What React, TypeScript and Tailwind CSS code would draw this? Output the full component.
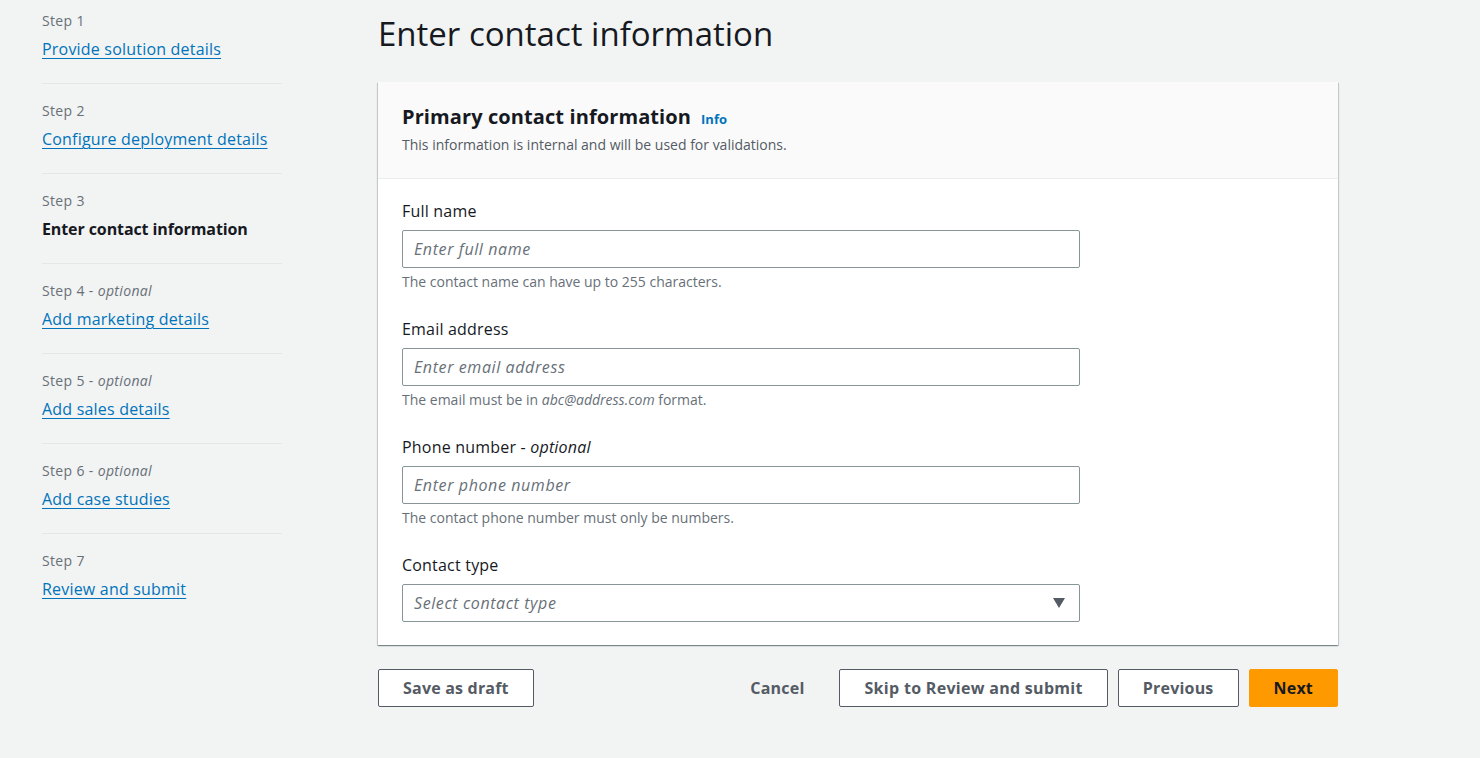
import React from "react";

const steps = [
  { n: 1, title: "Provide solution details", optional: false, current: false },
  { n: 2, title: "Configure deployment details", optional: false, current: false },
  { n: 3, title: "Enter contact information", optional: false, current: true },
  { n: 4, title: "Add marketing details", optional: true, current: false },
  { n: 5, title: "Add sales details", optional: true, current: false },
  { n: 6, title: "Add case studies", optional: true, current: false },
  { n: 7, title: "Review and submit", optional: false, current: false },
];

function Field({
  label,
  optional,
  placeholder,
  help,
  select,
}: {
  label: string;
  optional?: boolean;
  placeholder: string;
  help?: React.ReactNode;
  select?: boolean;
}) {
  return (
    <div className="flex flex-col">
      <div className="text-[16px] leading-[22px] tracking-[0.2px] text-[#16191f]">
        {label}
        {optional && (
          <>
            {" - "}
            <span className="italic">optional</span>
          </>
        )}
      </div>
      <div className="mt-2 w-[678px] h-[38px] border border-[#879596] rounded-[2px] bg-white flex items-center justify-between pl-[11px] pr-[14px]">
        <span className="italic text-[16px] tracking-[0.6px] text-[#687078]">{placeholder}</span>
        {select && (
          <svg width="12" height="10" viewBox="0 0 12 10">
            <path d="M0 0 H12 L6 10 Z" fill="#545b64" />
          </svg>
        )}
      </div>
      {help && (
        <div className="mt-1 text-[14px] leading-[20px] text-[#687078]">{help}</div>
      )}
    </div>
  );
}

export default function App() {
  return (
    <div
      className="min-h-[758px] w-full bg-[#f2f3f3] flex"
      style={{ fontFamily: "'Open Sans', 'Noto Sans', sans-serif" }}
    >
      <nav className="w-[240px] ml-[42px] pt-[11px] flex flex-col shrink-0">
        {steps.map((s, i) => (
          <div
            key={s.n}
            className={`flex flex-col ${i > 0 ? "pt-[17px]" : ""} ${
              i < steps.length - 1 ? "pb-[22px] border-b border-[#e4e7e7]" : ""
            }`}
          >
            <div className="text-[14px] leading-[20px] tracking-[0.35px] text-[#687078]">
              Step {s.n}
              {s.optional && (
                <>
                  {" - "}
                  <span className="italic">optional</span>
                </>
              )}
            </div>
            <div className="mt-[6px] leading-[24px]">
              {s.current ? (
                <span className="text-[16px] font-bold tracking-[-0.1px] text-[#16191f]">
                  {s.title}
                </span>
              ) : (
                <a className="text-[16px] tracking-[0.2px] text-[#0073bb] underline underline-offset-[3px] decoration-1">
                  {s.title}
                </a>
              )}
            </div>
          </div>
        ))}
      </nav>

      <main className="ml-[96px] w-[960px] flex flex-col pt-[14px]">
        <h1 className="text-[33px] leading-[40px] text-[#16191f] font-normal">
          Enter contact information
        </h1>

        <section className="mt-[28px] bg-white shadow-[0_1px_1px_0_rgba(0,28,36,0.3),1px_1px_1px_0_rgba(0,28,36,0.15),-1px_1px_1px_0_rgba(0,28,36,0.15)]">
          <div className="h-[97px] bg-[#fafafa] border-b border-[#eaeded] px-6 pt-[21px]">
            <div className="flex items-baseline gap-[10px]">
              <h2 className="text-[20px] leading-[28px] tracking-[0.1px] font-bold text-[#16191f]">
                Primary contact information
              </h2>
              <a className="text-[13px] font-bold text-[#0073bb]">Info</a>
            </div>
            <p className="text-[14px] leading-[20px] text-[#545b64] mt-[4px]">
              This information is internal and will be used for validations.
            </p>
          </div>
          <div className="px-6 pt-[21px] pb-[23px] flex flex-col gap-[26px]">
            <Field
              label="Full name"
              placeholder="Enter full name"
              help="The contact name can have up to 255 characters."
            />
            <Field
              label="Email address"
              placeholder="Enter email address"
              help={
                <>
                  The email must be in <span className="italic">abc@address.com</span> format.
                </>
              }
            />
            <Field
              label="Phone number"
              optional
              placeholder="Enter phone number"
              help="The contact phone number must only be numbers."
            />
            <Field label="Contact type" placeholder="Select contact type" select />
          </div>
        </section>

        <div className="mt-[24px] flex items-center">
          <button className="h-[38px] px-[24px] border border-[#545b64] rounded-[2px] bg-white text-[16px] tracking-[0.2px] font-bold text-[#545b64]">
            Save as draft
          </button>
          <div className="flex-1" />
          <button className="h-[38px] px-[20px] text-[16px] tracking-[0.2px] font-bold text-[#545b64]">
            Cancel
          </button>
          <button className="ml-[15px] h-[38px] px-[24px] border border-[#545b64] rounded-[2px] bg-white text-[16px] tracking-[0.3px] font-bold text-[#545b64]">
            Skip to Review and submit
          </button>
          <button className="ml-[10px] h-[38px] px-[24px] border border-[#545b64] rounded-[2px] bg-white text-[16px] tracking-[0.2px] font-bold text-[#545b64]">
            Previous
          </button>
          <button className="ml-[10px] h-[38px] px-[24px] rounded-[2px] bg-[#ff9900] border border-[#ff9900] text-[16px] tracking-[0.2px] font-bold text-[#16191f]">
            Next
          </button>
        </div>
      </main>
    </div>
  );
}
